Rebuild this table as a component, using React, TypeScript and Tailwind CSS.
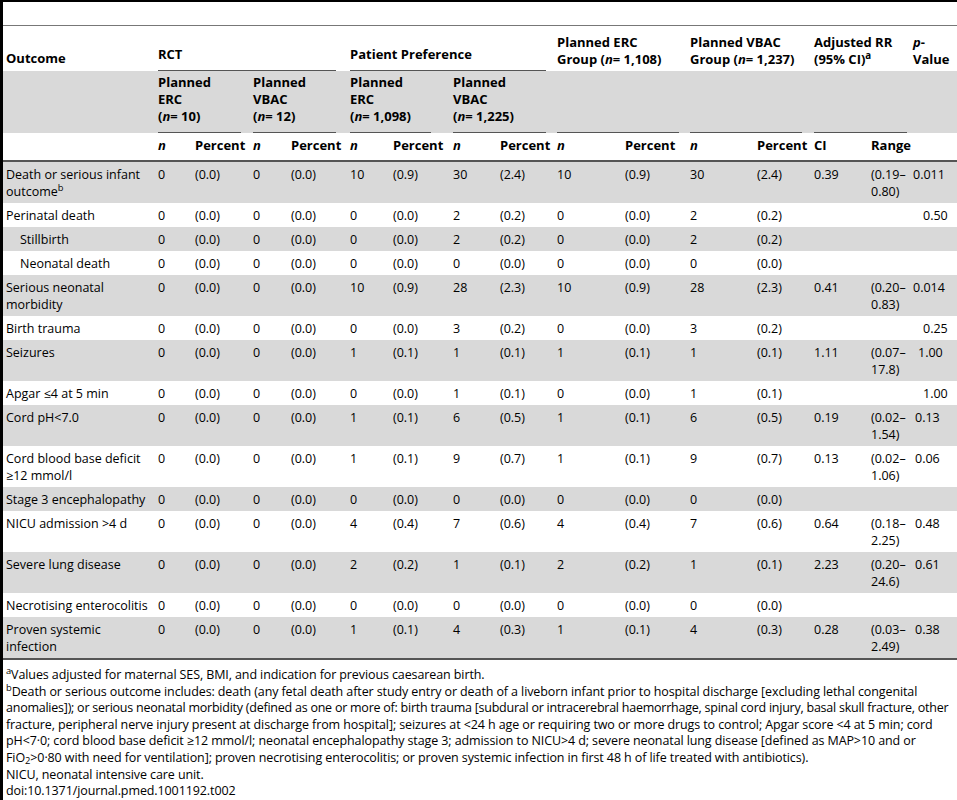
import React from "react";

type Row = {
  label: React.ReactNode;
  indent?: boolean;
  v: string[];
  ci?: string;
  range?: [string, string];
  p?: string;
  pShift?: string;
};

const rows: Row[] = [
  {
    label: (
      <>
        Death or serious infant
        <br />
        outcome<sup>b</sup>
      </>
    ),
    v: ["0", "(0.0)", "0", "(0.0)", "10", "(0.9)", "30", "(2.4)", "10", "(0.9)", "30", "(2.4)"],
    ci: "0.39",
    range: ["(0.19–", "0.80)"],
    p: "0.011",
    pShift: "pl-0",
  },
  {
    label: "Perinatal death",
    v: ["0", "(0.0)", "0", "(0.0)", "0", "(0.0)", "2", "(0.2)", "0", "(0.0)", "2", "(0.2)"],
    p: "0.50",
    pShift: "pl-[10px]",
  },
  {
    label: "Stillbirth",
    indent: true,
    v: ["0", "(0.0)", "0", "(0.0)", "0", "(0.0)", "2", "(0.2)", "0", "(0.0)", "2", "(0.2)"],
  },
  {
    label: "Neonatal death",
    indent: true,
    v: ["0", "(0.0)", "0", "(0.0)", "0", "(0.0)", "0", "(0.0)", "0", "(0.0)", "0", "(0.0)"],
  },
  {
    label: (
      <>
        Serious neonatal
        <br />
        morbidity
      </>
    ),
    v: ["0", "(0.0)", "0", "(0.0)", "10", "(0.9)", "28", "(2.3)", "10", "(0.9)", "28", "(2.3)"],
    ci: "0.41",
    range: ["(0.20–", "0.83)"],
    p: "0.014",
    pShift: "pl-0",
  },
  {
    label: "Birth trauma",
    v: ["0", "(0.0)", "0", "(0.0)", "0", "(0.0)", "3", "(0.2)", "0", "(0.0)", "3", "(0.2)"],
    p: "0.25",
    pShift: "pl-[10px]",
  },
  {
    label: "Seizures",
    v: ["0", "(0.0)", "0", "(0.0)", "1", "(0.1)", "1", "(0.1)", "1", "(0.1)", "1", "(0.1)"],
    ci: "1.11",
    range: ["(0.07–", "17.8)"],
    p: "1.00",
    pShift: "pl-[5px]",
  },
  {
    label: "Apgar ≤4 at 5 min",
    v: ["0", "(0.0)", "0", "(0.0)", "0", "(0.0)", "1", "(0.1)", "0", "(0.0)", "1", "(0.1)"],
    p: "1.00",
    pShift: "pl-[10px]",
  },
  {
    label: "Cord pH<7.0",
    v: ["0", "(0.0)", "0", "(0.0)", "1", "(0.1)", "6", "(0.5)", "1", "(0.1)", "6", "(0.5)"],
    ci: "0.19",
    range: ["(0.02–", "1.54)"],
    p: "0.13",
    pShift: "pl-[2px]",
  },
  {
    label: (
      <>
        Cord blood base deficit
        <br />
        ≥12 mmol/l
      </>
    ),
    v: ["0", "(0.0)", "0", "(0.0)", "1", "(0.1)", "9", "(0.7)", "1", "(0.1)", "9", "(0.7)"],
    ci: "0.13",
    range: ["(0.02–", "1.06)"],
    p: "0.06",
    pShift: "pl-[2px]",
  },
  {
    label: "Stage 3 encephalopathy",
    v: ["0", "(0.0)", "0", "(0.0)", "0", "(0.0)", "0", "(0.0)", "0", "(0.0)", "0", "(0.0)"],
  },
  {
    label: "NICU admission >4 d",
    v: ["0", "(0.0)", "0", "(0.0)", "4", "(0.4)", "7", "(0.6)", "4", "(0.4)", "7", "(0.6)"],
    ci: "0.64",
    range: ["(0.18–", "2.25)"],
    p: "0.48",
    pShift: "pl-[2px]",
  },
  {
    label: "Severe lung disease",
    v: ["0", "(0.0)", "0", "(0.0)", "2", "(0.2)", "1", "(0.1)", "2", "(0.2)", "1", "(0.1)"],
    ci: "2.23",
    range: ["(0.20–", "24.6)"],
    p: "0.61",
    pShift: "pl-[2px]",
  },
  {
    label: "Necrotising enterocolitis",
    v: ["0", "(0.0)", "0", "(0.0)", "0", "(0.0)", "0", "(0.0)", "0", "(0.0)", "0", "(0.0)"],
  },
  {
    label: (
      <>
        Proven systemic
        <br />
        infection
      </>
    ),
    v: ["0", "(0.0)", "0", "(0.0)", "1", "(0.1)", "4", "(0.3)", "1", "(0.1)", "4", "(0.3)"],
    ci: "0.28",
    range: ["(0.03–", "2.49)"],
    p: "0.38",
    pShift: "pl-[2px]",
  },
];

const td = "align-top pt-[3.5px] pb-[3.5px] whitespace-nowrap text-left font-normal";
const th = "text-left font-bold text-[13px]";

export default function App() {
  return (
    <div className="w-[957px] min-h-[800px] border-l-[3px] border-black bg-white text-black text-[12.5px] leading-[17px] font-['Open_Sans',sans-serif]">
      <div className="h-[26px] border-t-2 border-t-black border-b border-b-[#777]" />
      <table className="w-[954px] table-fixed border-collapse">
        <colgroup>
          <col className="w-[155px]" />
          <col className="w-[37px]" />
          <col className="w-[58px]" />
          <col className="w-[38px]" />
          <col className="w-[59px]" />
          <col className="w-[43px]" />
          <col className="w-[60px]" />
          <col className="w-[47px]" />
          <col className="w-[57px]" />
          <col className="w-[68px]" />
          <col className="w-[65px]" />
          <col className="w-[67px]" />
          <col className="w-[57px]" />
          <col className="w-[57px]" />
          <col className="w-[42px]" />
          <col className="w-[44px]" />
        </colgroup>
        <thead>
          <tr>
            <th className={`${th} h-[45px] align-bottom pb-[4.5px] pl-[3px]`}>Outcome</th>
            <th colSpan={4} className={`${th} align-bottom p-0`}>
              <div className="w-[178px] border-b border-[#555] pb-[7px]">RCT</div>
            </th>
            <th colSpan={4} className={`${th} align-bottom p-0`}>
              <div className="w-[196px] border-b border-[#555] pb-[7px] whitespace-nowrap">Patient Preference</div>
            </th>
            <th colSpan={2} className={`${th} align-bottom pb-[3.5px] whitespace-nowrap`}>
              Planned ERC
              <br />
              Group (<i>n</i>= 1,108)
            </th>
            <th colSpan={2} className={`${th} align-bottom pb-[3.5px] whitespace-nowrap`}>
              Planned VBAC
              <br />
              Group (<i>n</i>= 1,237)
            </th>
            <th colSpan={2} className={`${th} align-bottom pb-[3.5px] whitespace-nowrap`}>
              Adjusted RR
              <br />
              (95% CI)<sup>a</sup>
            </th>
            <th className={`${th} align-bottom pb-[3.5px] whitespace-nowrap`}>
              <i>p</i>-
              <br />
              Value
            </th>
          </tr>
          <tr className="bg-[#d9d9d9]">
            <td />
            <th colSpan={2} className={`${th} align-top pt-[3px]`}>
              <div className="w-[83px] border-b border-[#555] pb-[7px] whitespace-nowrap">
                Planned
                <br />
                ERC
                <br />(<i>n</i>= 10)
              </div>
            </th>
            <th colSpan={2} className={`${th} align-top pt-[3px]`}>
              <div className="w-[83px] border-b border-[#555] pb-[7px] whitespace-nowrap">
                Planned
                <br />
                VBAC
                <br />(<i>n</i>= 12)
              </div>
            </th>
            <th colSpan={2} className={`${th} align-top pt-[3px]`}>
              <div className="w-[81px] border-b border-[#555] pb-[7px] whitespace-nowrap">
                Planned
                <br />
                ERC
                <br />(<i>n</i>= 1,098)
              </div>
            </th>
            <th colSpan={2} className={`${th} align-top pt-[3px]`}>
              <div className="w-[93px] border-b border-[#555] pb-[7px] whitespace-nowrap">
                Planned
                <br />
                VBAC
                <br />(<i>n</i>= 1,225)
              </div>
            </th>
            <td colSpan={2} className="align-bottom">
              <div className="w-[122px] border-b border-[#555]" />
            </td>
            <td colSpan={2} className="align-bottom">
              <div className="w-[112px] border-b border-[#555]" />
            </td>
            <td colSpan={2} className="align-bottom">
              <div className="w-[93px] border-b border-[#555]" />
            </td>
            <td />
          </tr>
          <tr className="border-b-2 border-[#555]">
            <th />
            {[0, 1, 2, 3, 4, 5].map((k) => (
              <React.Fragment key={k}>
                <th className={`${th} pt-[3.5px] pb-[6.5px] italic`}>n</th>
                <th className={`${th} pt-[3.5px] pb-[6.5px]`}>Percent</th>
              </React.Fragment>
            ))}
            <th className={`${th} pt-[3.5px] pb-[6.5px]`}>CI</th>
            <th className={`${th} pt-[3.5px] pb-[6.5px]`}>Range</th>
            <th />
          </tr>
        </thead>
        <tbody>
          {rows.map((r, i) => (
            <tr
              key={i}
              className={`${i % 2 === 0 ? "bg-[#d9d9d9]" : "bg-white"} ${
                i === rows.length - 1 ? "border-b-2 border-[#555]" : ""
              }`}
            >
              <td className={`${td} ${r.indent ? "pl-[17px]" : "pl-[3px]"}`}>{r.label}</td>
              {r.v.map((v, j) => (
                <td key={j} className={td}>
                  {v}
                </td>
              ))}
              <td className={td}>{r.ci ?? ""}</td>
              <td className={td}>
                {r.range ? (
                  <>
                    {r.range[0]}
                    <br />
                    {r.range[1]}
                  </>
                ) : null}
              </td>
              <td className={`${td} ${r.pShift ?? ""}`}>{r.p ?? ""}</td>
            </tr>
          ))}
        </tbody>
      </table>
      <div className="pl-[3px] pt-[7px] text-[12.5px] tracking-[-0.1px] leading-[16.6px] whitespace-nowrap">
        <div>
          <sup>a</sup>Values adjusted for maternal SES, BMI, and indication for previous caesarean birth.
        </div>
        <div>
          <sup>b</sup>Death or serious outcome includes: death (any fetal death after study entry or death of a liveborn
          infant prior to hospital discharge [excluding lethal congenital
        </div>
        <div className="tracking-[-0.24px]">
          anomalies]); or serious neonatal morbidity (defined as one or more of: birth trauma [subdural or intracerebral
          haemorrhage, spinal cord injury, basal skull fracture, other
        </div>
        <div>
          fracture, peripheral nerve injury present at discharge from hospital]; seizures at &lt;24 h age or requiring two
          or more drugs to control; Apgar score &lt;4 at 5 min; cord
        </div>
        <div>
          pH&lt;7·0; cord blood base deficit ≥12 mmol/l; neonatal encephalopathy stage 3; admission to NICU&gt;4 d;
          severe neonatal lung disease [defined as MAP&gt;10 and or
        </div>
        <div>
          FiO<sub>2</sub>&gt;0·80 with need for ventilation]; proven necrotising enterocolitis; or proven systemic
          infection in first 48 h of life treated with antibiotics).
        </div>
        <div>NICU, neonatal intensive care unit.</div>
        <div>doi:10.1371/journal.pmed.1001192.t002</div>
      </div>
    </div>
  );
}
